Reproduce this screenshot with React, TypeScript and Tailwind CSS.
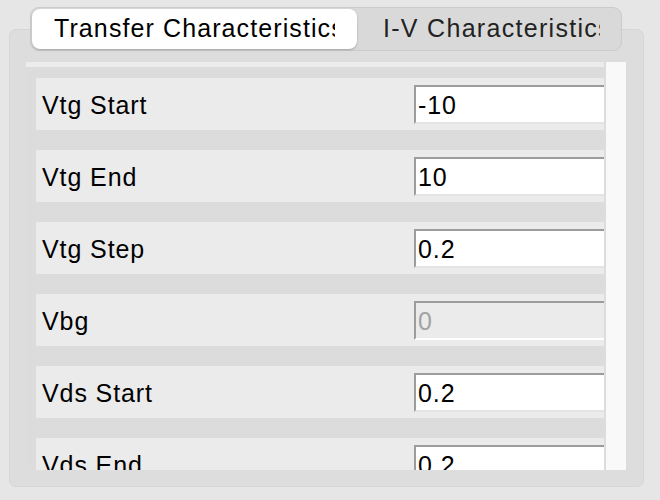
import React from "react";

type Field = { label: string; value: string; disabled?: boolean };

const fields: Field[] = [
  { label: "Vtg Start", value: "-10" },
  { label: "Vtg End", value: "10" },
  { label: "Vtg Step", value: "0.2" },
  { label: "Vbg", value: "0", disabled: true },
  { label: "Vds Start", value: "0.2" },
  { label: "Vds End", value: "0.2" },
];

const FieldRow: React.FC<{ field: Field }> = ({ field }) => (
  <div className="flex h-[52px] shrink-0 items-center overflow-hidden bg-[#ebebeb] pl-[6px]">
    <span className="w-[372px] shrink-0 pt-[4px] text-black">{field.label}</span>
    <div
      className={
        field.disabled
          ? "flex h-[39px] w-[240px] shrink-0 items-center border-t-2 border-l-2 border-b-2 border-t-[#9c9c9c] border-l-[#9c9c9c] border-b-white bg-[#ebebeb] pl-[2px] pt-[3px] text-[#a3a3a3]"
          : "flex h-[39px] w-[240px] shrink-0 items-center border-t-2 border-l-2 border-b-2 border-t-[#9c9c9c] border-l-[#9c9c9c] border-b-[#e4e4e4] bg-white pl-[2px] pt-[3px] text-black"
      }
    >
      {field.value}
    </div>
  </div>
);

export default function App() {
  return (
    <div
      className="flex h-[500px] w-[660px] flex-col overflow-hidden bg-[#e6e6e6] pt-[7px] text-[25px] tracking-[0.9px]"
      style={{ fontFamily: '"Liberation Sans", Arial, sans-serif' }}
    >
      <div className="relative z-10 ml-[30px] flex h-[44px] w-[592px] items-center rounded-[9px] border border-[#cbcbcb] bg-[#d9d9d9] p-[1px]">
        <div className="flex h-[40px] w-[325px] shrink-0 items-center overflow-hidden rounded-[8px] bg-white pl-[22px] shadow-[0_1px_2px_rgba(0,0,0,0.25)]">
          <span className="w-[281px] shrink-0 overflow-hidden whitespace-nowrap tracking-[1.1px] text-black">
            Transfer Characteristics
          </span>
        </div>
        <div className="flex h-[40px] flex-1 items-center overflow-hidden pl-[26px]">
          <span className="w-[217px] shrink-0 overflow-hidden whitespace-nowrap tracking-[1.3px] text-[#222]">
            I-V Characteristics
          </span>
        </div>
      </div>

      <div className="ml-[9px] mt-[-22px] flex h-[458px] w-[635px] rounded-[7px] border border-[#d6d6d6] bg-[#dddddd] pb-[16px] pl-[16px] pr-[17px] pt-[32px]">
        <div className="flex h-[408px] w-[600px]">
          <div className="flex w-[580px] flex-col overflow-hidden bg-[#dcdcdc]">
            <div className="h-[5px] w-[578px] shrink-0 bg-[#ececec]" />
            <div className="flex flex-col gap-[20px] pl-[10px] pr-[2px] pt-[11px]">
              {fields.map((f) => (
                <FieldRow key={f.label} field={f} />
              ))}
            </div>
          </div>
          <div className="w-[20px] bg-[#f9f9f9]" />
        </div>
      </div>
    </div>
  );
}
